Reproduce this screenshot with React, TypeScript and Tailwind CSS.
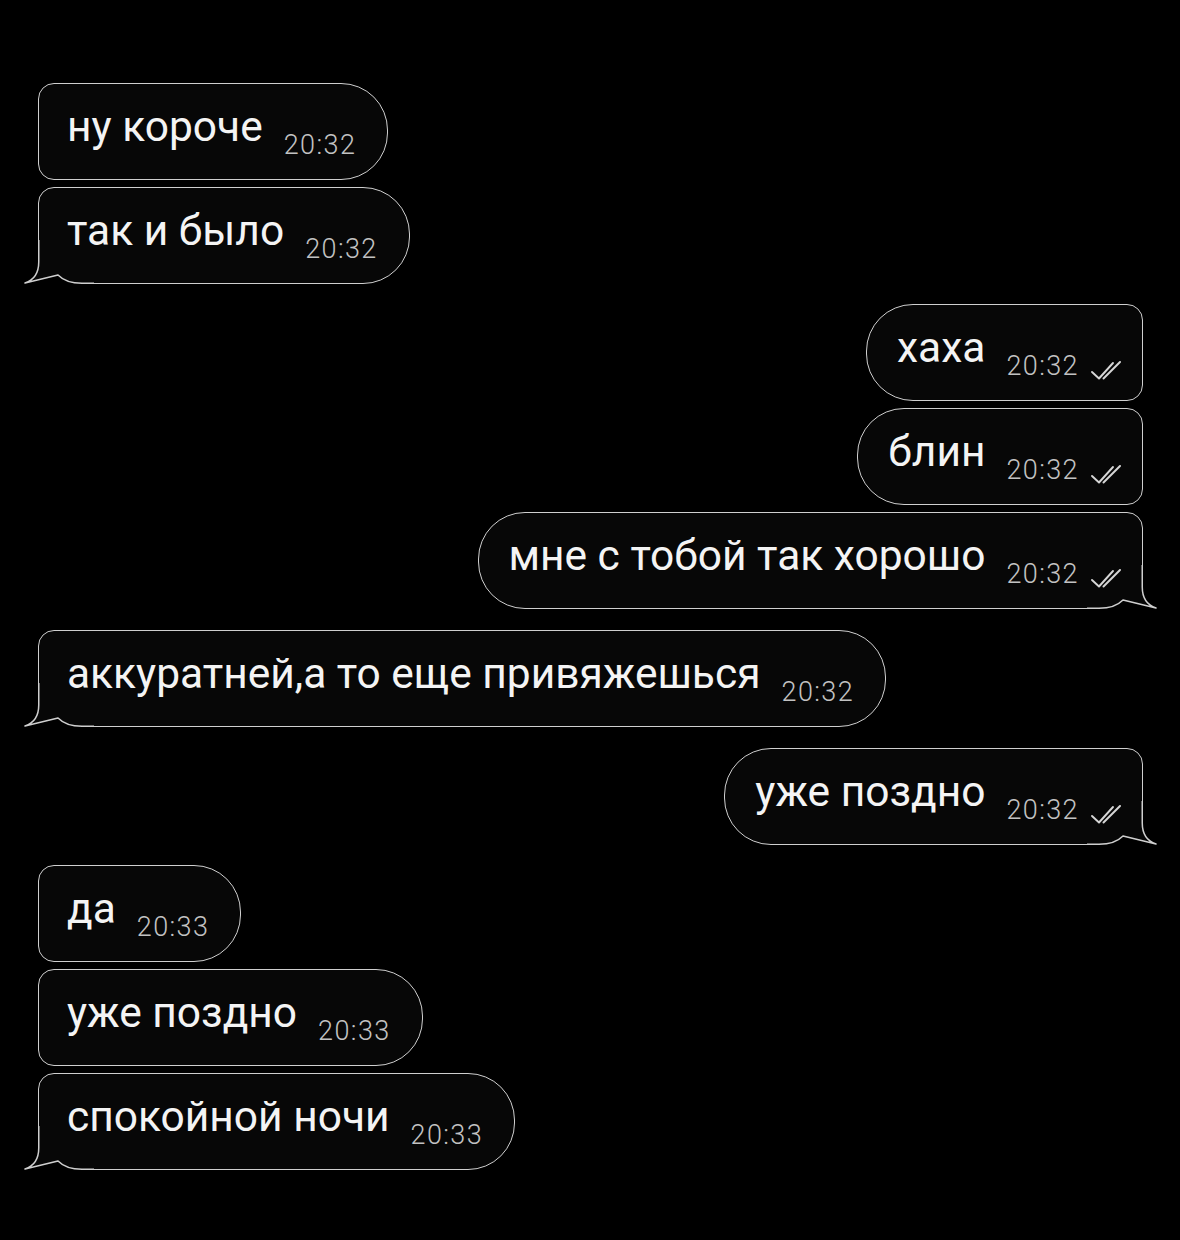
import React from "react";

type Msg = { text: string; time: string; out: boolean; tail: boolean; gapTop: number };

const msgs: Msg[] = [
  { text: "ну короче", time: "20:32", out: false, tail: false, gapTop: 0 },
  { text: "так и было", time: "20:32", out: false, tail: true, gapTop: 7 },
  { text: "хаха", time: "20:32", out: true, tail: false, gapTop: 20 },
  { text: "блин", time: "20:32", out: true, tail: false, gapTop: 7 },
  { text: "мне с тобой так хорошо", time: "20:32", out: true, tail: true, gapTop: 7 },
  { text: "аккуратней,а то еще привяжешься", time: "20:32", out: false, tail: true, gapTop: 21 },
  { text: "уже поздно", time: "20:32", out: true, tail: true, gapTop: 21 },
  { text: "да", time: "20:33", out: false, tail: false, gapTop: 20 },
  { text: "уже поздно", time: "20:33", out: false, tail: false, gapTop: 7 },
  { text: "спокойной ночи", time: "20:33", out: false, tail: true, gapTop: 7 },
];

const BUBBLE = "#070707";
const LINE = "#cfcfcf";

function Tail({ out }: { out: boolean }) {
  const g = out ? "translate(72 0) scale(-1 1)" : undefined;
  return (
    <svg
      width="72"
      height="44"
      viewBox="0 0 72 44"
      className={out ? "absolute right-[-16px] bottom-0" : "absolute left-[-16px] bottom-0"}
    >
      <g transform={g}>
        <rect x="0" y="0" width="72" height="44" fill="#000" />
        <path
          d="M16.75 0 V22 C16.75 33 12 40 3 43 L36 35 Q44 43.25 60 43.25 H72 V0 Z"
          fill={BUBBLE}
        />
        <path
          d="M16.75 0 V22 C16.75 33 12 40 3 43 L36 35 Q44 43.25 60 43.25 H72"
          fill="none"
          stroke={LINE}
          strokeWidth="1.5"
          strokeLinejoin="round"
        />
      </g>
    </svg>
  );
}

function Checks() {
  return (
    <svg width="32" height="20" viewBox="0 0 32 20" className="ml-[11px]">
      <path d="M2 11 L9 17.5 L23 2" fill="none" stroke="#d6d6d6" strokeWidth="1.9" strokeLinecap="round" strokeLinejoin="round" />
      <path d="M13.5 17.5 L30 1" fill="none" stroke="#d6d6d6" strokeWidth="1.9" strokeLinecap="round" />
    </svg>
  );
}

function Bubble({ m }: { m: Msg }) {
  const radius = m.out
    ? `rounded-tl-[47px] rounded-bl-[47px] rounded-tr-[16px] ${m.tail ? "rounded-br-none" : "rounded-br-[16px]"}`
    : `rounded-tr-[47px] rounded-br-[47px] rounded-tl-[16px] ${m.tail ? "rounded-bl-none" : "rounded-bl-[16px]"}`;
  return (
    <div
      className={`flex ${m.out ? "justify-end" : "justify-start"}`}
      style={{ marginTop: m.gapTop }}
    >
      <div className="relative">
        <div
          className={`h-[97px] border-[1.5px] border-[#cfcfcf] bg-[#070707] flex items-center ${radius} ${
            m.out ? "pl-[30px] pr-[20px]" : "pl-[28px] pr-[31px]"
          }`}
        >
          <div className="relative z-10 flex items-baseline pb-[8px]">
            <span className="text-[42.5px] leading-none text-[#f4f4f4] font-normal">{m.text}</span>
            <span className="ml-[21px] text-[27px] leading-none font-light text-[#c2c2c2] translate-y-[13px] tracking-[1.4px]">
              {m.time}
            </span>
            {m.out && (
              <span className="translate-y-[11px] self-end flex">
                <Checks />
              </span>
            )}
          </div>
        </div>
        {m.tail && <Tail out={m.out} />}
      </div>
    </div>
  );
}

export default function App() {
  return (
    <div
      className="w-[1180px] h-[1240px] bg-black pt-[83px] pl-[38px] pr-[37px]"
      style={{ fontFamily: "Roboto, 'Noto Sans', sans-serif" }}
    >
      <div className="flex flex-col">
        {msgs.map((m, i) => (
          <Bubble key={i} m={m} />
        ))}
      </div>
    </div>
  );
}
